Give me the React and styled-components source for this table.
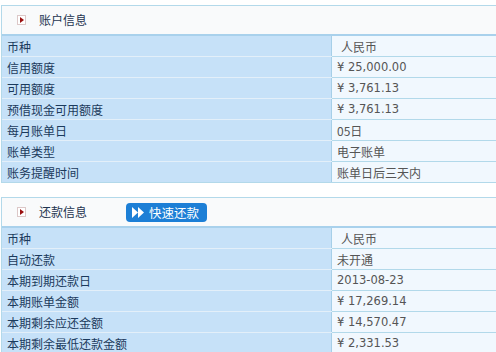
import React from 'react';
import styled, { createGlobalStyle } from 'styled-components';

const Global = createGlobalStyle`
  html, body {
    margin: 0;
    padding: 0;
    background: #fff;
    overflow: hidden;
  }
  body {
    font-family: "Noto Sans CJK SC", "DejaVu Sans", sans-serif;
    font-size: 12px;
  }
`;

const Page = styled.div`
  padding-top: 5px;
`;

const Panel = styled.div`
  margin-left: 1px;
  margin-bottom: 14px;
  border: 1px solid #b3d9ea;
  border-right: none;
`;

const Header = styled.div`
  display: flex;
  align-items: center;
  height: 28px;
  background: #f9fafb;
  border-bottom: 2px solid #a9d1ec;
  padding-left: 15px;
`;

const Marker = styled.span`
  display: inline-flex;
  align-items: center;
  justify-content: center;
  box-sizing: border-box;
  width: 9px;
  height: 10px;
  border: 1px solid #dcc8c8;
  background: #fff;
  margin-right: 13px;

  &::after {
    content: '';
    border-left: 4px solid #9b1010;
    border-top: 3px solid transparent;
    border-bottom: 3px solid transparent;
  }
`;

const Title = styled.span`
  color: #1e3550;
  font-size: 12px;
  line-height: 1;
`;

const QuickBtn = styled.button`
  display: inline-flex;
  align-items: center;
  gap: 4px;
  height: 19px;
  width: 81px;
  margin-left: 39px;
  padding: 0 0 0 6px;
  border: none;
  border-radius: 4px;
  background: #1d7fd6;
  color: #fff;
  font-family: "Noto Sans CJK SC", sans-serif;
  font-size: 12.5px;
  cursor: pointer;
`;

const Row = styled.div`
  display: flex;
  height: 20px;
  border-bottom: 1px solid #e3eff9;
  &:last-child {
    border-bottom: none;
  }
`;

const Label = styled.div`
  display: flex;
  align-items: center;
  box-sizing: border-box;
  width: 330px;
  padding-left: 5px;
  background: #c6e1f8;
  color: #1b3a5c;
  border-right: 1px solid #a6cfe8;
`;

const Value = styled.div`
  flex: 1;
  display: flex;
  align-items: center;
  padding-left: ${(p) => (p.indent ? 9 : 5)}px;
  background: #f1f8fe;
  color: #555;
  border-bottom: 1px solid #b2d9ea;
  margin-bottom: -1px;
  font-family: ${(p) => (p.num ? '"DejaVu Sans", sans-serif' : '"Noto Sans CJK SC", sans-serif')};
  font-size: ${(p) => (p.num ? '11.5px' : '12px')};
`;

const account = [
  ['币种', '人民币', false, true],
  ['信用额度', '¥ 25,000.00', true],
  ['可用额度', '¥ 3,761.13', true],
  ['预借现金可用额度', '¥ 3,761.13', true],
  ['每月账单日', '05日', false],
  ['账单类型', '电子账单', false],
  ['账务提醒时间', '账单日后三天内', false],
];

const repay = [
  ['币种', '人民币', false, true],
  ['自动还款', '未开通', false],
  ['本期到期还款日', '2013-08-23', true],
  ['本期账单金额', '¥ 17,269.14', true],
  ['本期剩余应还金额', '¥ 14,570.47', true],
  ['本期剩余最低还款金额', '¥ 2,331.53', true],
];

const FastIcon = () => (
  <svg width="13" height="11" viewBox="0 0 13 11">
    <path d="M0 0 L6 5.5 L0 11 Z M6 0 L12 5.5 L6 11 Z" fill="#fff" />
  </svg>
);

const Rows = ({ data }) => data.map(([k, v, num, indent]) => (
  <Row key={k}>
    <Label>{k}</Label>
    <Value num={num} indent={indent}>{v}</Value>
  </Row>
));

const App = () => (
  <Page>
    <Global />
    <Panel>
      <Header>
        <Marker />
        <Title>账户信息</Title>
      </Header>
      <Rows data={account} />
    </Panel>
    <Panel>
      <Header>
        <Marker />
        <Title>还款信息</Title>
        <QuickBtn>
          <FastIcon />
          快速还款
        </QuickBtn>
      </Header>
      <Rows data={repay} />
    </Panel>
  </Page>
);

export default App;
